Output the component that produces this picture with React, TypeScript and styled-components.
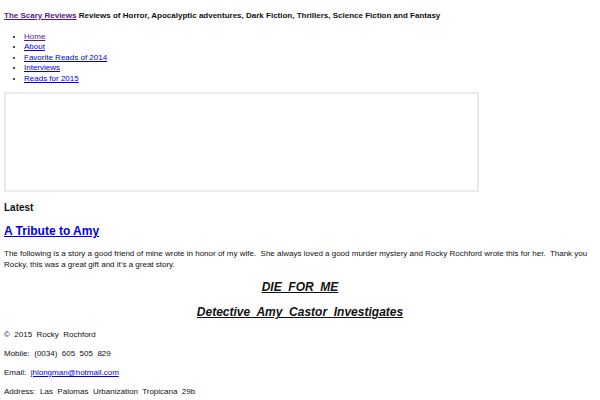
import React from "react";
import styled, { createGlobalStyle } from "styled-components";

const Global = createGlobalStyle`
  html, body { margin: 0; padding: 0; background: #fff; }
  body { font-family: "Liberation Sans", Arial, sans-serif; color: #111; }
  a { color: #0000ee; }
`;

const Page = styled.div`
  padding: 0 4px;
`;

const Masthead = styled.div`
  padding-top: 10px;
  font-size: 8px;
  font-weight: bold;
  line-height: 11px;
`;

const SiteLink = styled.a`
  color: #551a8b;
`;

const Nav = styled.ul`
  margin: 11px 0 0;
  padding-left: 20px;
  font-size: 8px;
  line-height: 10.4px;
`;

const NavLink = styled.a<{ $visited?: boolean }>`
  color: ${(p) => (p.$visited ? "#551a8b" : "#0000ee")};
`;

const Banner = styled.div`
  box-sizing: border-box;
  margin-top: 8px;
  width: 80.3%;
  height: 100px;
  border: 2px solid #ebebeb;
`;

const SectionTitle = styled.h3`
  margin: 10px 0 0;
  font-size: 10px;
  line-height: 12px;
  font-weight: bold;
`;

const PostTitle = styled.h2`
  margin: 9px 0 0;
  font-size: 12px;
  line-height: 16px;
  font-weight: bold;
  a { color: #0000ee; }
`;

const Para = styled.p`
  margin: 9px 0 0;
  font-size: 8px;
  line-height: 11px;
  white-space: pre-wrap;
`;

const Centered = styled.h4<{ $gap: number }>`
  margin: ${(p) => p.$gap}px 0 0;
  text-align: center;
  font-size: 12px;
  line-height: 14px;
  font-weight: bold;
  font-style: italic;
  text-decoration: underline;
  white-space: pre;
`;

const Line = styled.p`
  margin: 0;
  padding-top: 7px;
  font-size: 8px;
  line-height: 12px;
  white-space: pre;
  &:first-of-type { padding-top: 10px; }
`;

export default function App() {
  return (
    <>
      <Global />
      <Page>
        <Masthead>
          <SiteLink href="#">The Scary Reviews</SiteLink> Reviews of Horror, Apocalyptic adventures, Dark Fiction, Thrillers, Science Fiction and Fantasy
        </Masthead>
        <Nav>
          <li><NavLink href="#" $visited>Home</NavLink></li>
          <li><NavLink href="#">About</NavLink></li>
          <li><NavLink href="#">Favorite Reads of 2014</NavLink></li>
          <li><NavLink href="#">Interviews</NavLink></li>
          <li><NavLink href="#">Reads for 2015</NavLink></li>
        </Nav>
        <Banner />
        <SectionTitle>Latest</SectionTitle>
        <PostTitle><a href="#">A Tribute to Amy</a></PostTitle>
        <Para>
          {"The following is a story a good friend of mine wrote in honor of my wife.  She always loved a good murder mystery and Rocky Rochford wrote this for her.  Thank you Rocky, this was a great gift and it’s a great story."}
        </Para>
        <Centered $gap={10}>{"DIE  FOR  ME"}</Centered>
        <Centered $gap={11}>{"Detective  Amy  Castor  Investigates"}</Centered>
        <div>
          <Line>{"©  2015  Rocky  Rochford"}</Line>
          <Line>{"Mobile:  (0034)  605  505  829"}</Line>
          <Line>{"Email:  "}<a href="#">jhlongman@hotmail.com</a></Line>
          <Line>{"Address:  Las  Palomas  Urbanization  Tropicana  29b"}</Line>
        </div>
      </Page>
    </>
  );
}
